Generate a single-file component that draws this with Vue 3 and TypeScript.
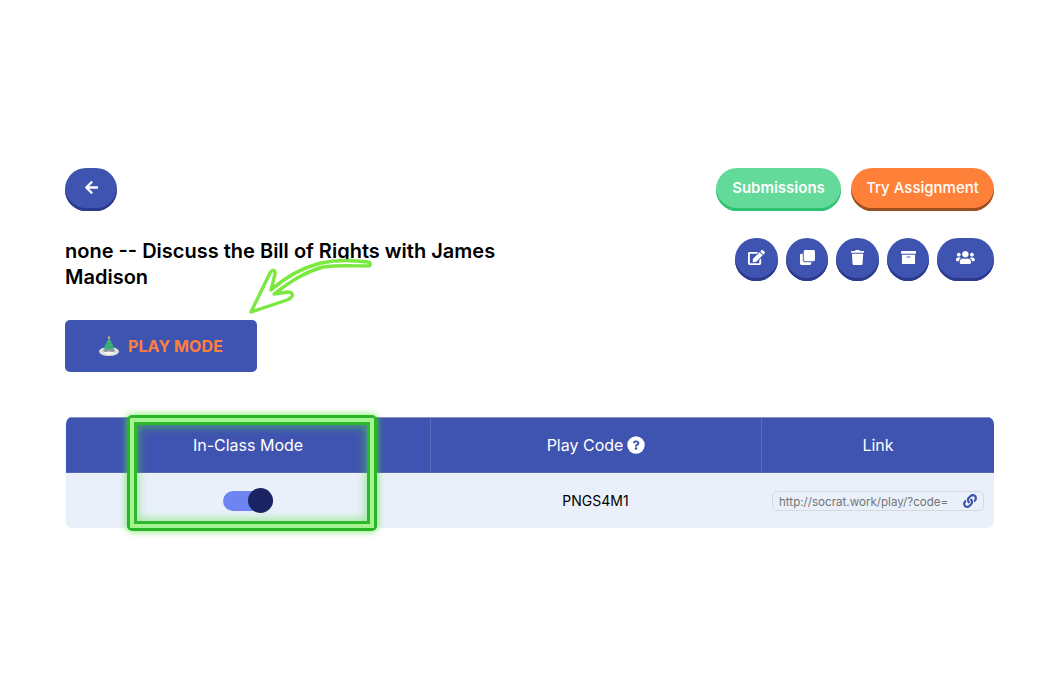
<template>
  <div class="page">
    <div class="top-row">
      <button class="btn btn-blue btn-back" aria-label="Back">
        <svg class="ico" viewBox="0 0 448 512"><path :d="icons.back" /></svg>
      </button>
      <div class="top-actions">
        <button class="btn btn-green">Submissions</button>
        <button class="btn btn-orange">Try Assignment</button>
      </div>
    </div>

    <div class="title-row">
      <h1 class="title">none -- Discuss the Bill of Rights with James Madison</h1>
      <div class="icon-actions">
        <button v-for="b in iconButtons" :key="b.name" class="btn btn-blue btn-icon" :class="b.cls" :aria-label="b.name">
          <svg class="ico" :viewBox="b.box"><path :d="b.d" /></svg>
        </button>
      </div>
    </div>

    <button class="play-btn">
      <svg class="play-ico" viewBox="0 0 20 20">
        <ellipse cx="10" cy="15.500" rx="10" ry="4.500" fill="#dfe0dc" />
        <ellipse cx="10" cy="14.500" rx="6" ry="2.200" fill="#8f96a0" />
        <ellipse cx="10" cy="17" rx="5" ry="1.500" fill="#f3f3ef" />
        <path d="M10 1.500l5.500 11q-5.500 2-11 0z" fill="#3fb57c" />
        <path d="M7.500 7.500q2.500 1 5 0M6 10.500q4 1.300 8 0" fill="none" stroke="#2f8f74" stroke-width="0.800" />
        <circle cx="10" cy="1.500" r="1.200" fill="#e9a05c" />
      </svg>
      <span>PLAY MODE</span>
    </button>

    <div class="table">
      <div class="cell head">In-Class Mode</div>
      <div class="cell head sep">
        Play Code
        <svg class="help" viewBox="0 0 512 512">
          <circle cx="256" cy="256" r="248" fill="#fff" />
          <path class="help-mark" :d="icons.helpMark" />
        </svg>
      </div>
      <div class="cell head sep">Link</div>
      <div class="cell">
        <span class="toggle"><span class="knob"></span></span>
      </div>
      <div class="cell code">PNGS4M1</div>
      <div class="cell">
        <div class="link-box">
          <span class="link-text">http://socrat.work/play/?code=</span>
          <svg class="link-ico" viewBox="0 0 512 512"><path :d="icons.link" /></svg>
        </div>
      </div>
    </div>

    <!-- hand drawn annotations on top of the screenshot -->
    <div class="mark-box"></div>
    <svg class="mark-arrow" viewBox="0 0 130 60">
      <path
        d="M125 5C110 3 92 3 78 6C62 10 45 18 28 33L32 17C33 13 29 12 27 16L8 55L44 43C51 40 51 35 45 35L31 37C48 24 62 15 80 10C95 8 112 9 125 9C128 9 128 5 125 5Z"
        fill="#fff"
        stroke="#7be83f"
        stroke-width="3.400"
        stroke-linejoin="round"
      />
    </svg>
  </div>
</template>

<script setup lang="ts">
const icons = {
  back: 'M257.5 445.1l-22.2 22.2c-9.4 9.4-24.6 9.4-33.9 0L7 273c-9.4-9.4-9.4-24.6 0-33.9L201.4 44.7c9.4-9.4 24.6-9.4 33.9 0l22.2 22.2c9.5 9.5 9.3 25-.4 34.3L136.6 216H424c13.3 0 24 10.7 24 24v32c0 13.3-10.7 24-24 24H136.6l120.5 114.8c9.8 9.3 10 24.8.4 34.3z',
  helpMark: 'M262.655 90c-54.497 0-89.255 22.957-116.549 63.758-3.536 5.286-2.353 12.415 2.715 16.258l34.699 26.31c5.205 3.947 12.621 3.008 16.665-2.122 17.864-22.658 30.113-35.797 57.303-35.797 20.429 0 45.698 13.148 45.698 32.958 0 14.976-12.363 22.667-32.534 33.976C247.128 238.528 216 254.941 216 296v4c0 6.627 5.373 12 12 12h56c6.627 0 12-5.373 12-12v-1.333c0-28.462 83.186-29.647 83.186-106.667 0-58.002-60.165-102-116.531-102zM256 338c-25.365 0-46 20.635-46 46 0 25.364 20.635 46 46 46s46-20.636 46-46c0-25.365-20.635-46-46-46z',
  link: 'M326.612 185.391c59.747 59.809 58.927 155.698.36 214.59-.11.12-.24.25-.36.37l-67.2 67.2c-59.27 59.27-155.699 59.262-214.96 0-59.27-59.26-59.27-155.7 0-214.96l37.106-37.106c9.84-9.84 26.786-3.3 27.294 10.606.648 17.722 3.826 35.527 9.69 52.721 1.986 5.822.567 12.262-3.783 16.612l-13.087 13.087c-28.026 28.026-28.905 73.66-1.155 101.96 28.024 28.579 74.086 28.749 102.325.51l67.2-67.19c28.191-28.191 28.073-73.757 0-101.83-3.701-3.694-7.429-6.564-10.341-8.569a16.037 16.037 0 0 1-6.947-12.606c-.396-10.567 3.348-21.456 11.698-29.806l21.054-21.055c5.521-5.521 14.182-6.199 20.584-1.731a152.482 152.482 0 0 1 20.522 17.197zM467.547 44.449c-59.261-59.262-155.69-59.27-214.96 0l-67.2 67.2c-.12.12-.25.25-.36.37-58.566 58.892-59.387 154.781.36 214.59a152.454 152.454 0 0 0 20.521 17.196c6.402 4.468 15.064 3.789 20.584-1.731l21.054-21.055c8.35-8.35 12.094-19.239 11.698-29.806a16.037 16.037 0 0 0-6.947-12.606c-2.912-2.005-6.64-4.875-10.341-8.569-28.073-28.073-28.191-73.639 0-101.83l67.2-67.19c28.239-28.239 74.3-28.069 102.325.51 27.75 28.3 26.872 73.934-1.155 101.96l-13.087 13.087c-4.35 4.35-5.769 10.79-3.783 16.612 5.864 17.194 9.042 34.999 9.69 52.721.509 13.906 17.454 20.446 27.294 10.606l37.106-37.106c59.271-59.259 59.271-155.699.001-214.959z'
}

const iconButtons = [
  {
    name: 'Edit',
    cls: '',
    box: '0 0 576 512',
    d: 'M402.6 83.2l90.2 90.2c3.8 3.8 3.8 10 0 13.8L274.4 405.6l-92.8 10.3c-12.4 1.4-22.9-9.1-21.5-21.5l10.3-92.8L388.8 83.2c3.8-3.8 10-3.8 13.8 0zm162-22.9l-48.8-48.8c-15.2-15.2-39.9-15.2-55.2 0l-35.4 35.4c-3.8 3.8-3.8 10 0 13.8l90.2 90.2c3.8 3.8 10 3.8 13.8 0l35.4-35.4c15.2-15.3 15.2-40 0-55.2zM384 346.2V448H64V128h229.8c3.2 0 6.2-1.3 8.5-3.5l40-40c7.6-7.6 2.2-20.5-8.5-20.5H48C21.5 64 0 85.5 0 112v352c0 26.5 21.5 48 48 48h352c26.5 0 48-21.5 48-48V306.2c0-10.7-12.9-16-20.5-8.5l-40 40c-2.2 2.3-3.5 5.3-3.5 8.5z'
  },
  {
    name: 'Copy',
    cls: 'btn-narrow',
    box: '0 0 512 512',
    d: 'M464 0c26.51 0 48 21.49 48 48v288c0 26.51-21.49 48-48 48H176c-26.51 0-48-21.49-48-48V48c0-26.51 21.49-48 48-48h288M176 416c-44.112 0-80-35.888-80-80V128H48c-26.51 0-48 21.49-48 48v288c0 26.51 21.49 48 48 48h288c26.51 0 48-21.49 48-48v-48H176z'
  },
  {
    name: 'Delete',
    cls: '',
    box: '0 0 448 512',
    d: 'M432 32H312l-9.4-18.7A24 24 0 0 0 281.1 0H166.8a23.72 23.72 0 0 0-21.4 13.3L136 32H16A16 16 0 0 0 0 48v32a16 16 0 0 0 16 16h416a16 16 0 0 0 16-16V48a16 16 0 0 0-16-16zM53.2 467a48 48 0 0 0 47.9 45h245.8a48 48 0 0 0 47.9-45L416 128H32z'
  },
  {
    name: 'Archive',
    cls: 'btn-narrow',
    box: '0 0 512 512',
    d: 'M32 448c0 17.7 14.3 32 32 32h384c17.7 0 32-14.3 32-32V160H32v288zm160-212c0-6.6 5.4-12 12-12h104c6.6 0 12 5.4 12 12v8c0 6.6-5.4 12-12 12H204c-6.6 0-12-5.4-12-12v-8zM480 32H32C14.3 32 0 46.3 0 64v48c0 8.8 7.2 16 16 16h480c8.8 0 16-7.2 16-16V64c0-17.7-14.3-32-32-32z'
  },
  {
    name: 'Users',
    cls: 'btn-wide',
    box: '0 0 640 512',
    d: 'M96 224c35.3 0 64-28.7 64-64s-28.7-64-64-64-64 28.7-64 64 28.7 64 64 64zm448 0c35.3 0 64-28.7 64-64s-28.7-64-64-64-64 28.7-64 64 28.7 64 64 64zm32 32h-64c-17.6 0-33.5 7.1-45.1 18.6 40.3 22.1 68.9 62 75.1 109.4h66c17.7 0 32-14.3 32-32v-32c0-35.3-28.7-64-64-64zm-256 0c61.9 0 112-50.1 112-112S381.9 32 320 32 208 82.1 208 144s50.1 112 112 112zm76.8 32h-8.3c-20.8 10-43.9 16-68.5 16s-47.6-6-68.5-16h-8.3C179.6 288 128 339.6 128 403.2V432c0 26.5 21.5 48 48 48h288c26.5 0 48-21.5 48-48v-28.8c0-63.6-51.6-115.2-115.2-115.2zm-223.7-13.4C161.5 263.1 145.6 256 128 256H64c-35.3 0-64 28.7-64 64v32c0 17.7 14.3 32 32 32h65.9c6.3-47.4 34.9-87.3 75.2-109.4z'
  }
]
</script>

<style>
html, body {
  background: #fff;
}
</style>

<style scoped>
.page {
  position: relative;
  box-sizing: border-box;
  width: 1059px;
  height: 686px;
  padding: 168px 65px 0;
  font-family: Inter, "Liberation Sans", sans-serif;
  color: #000;
}

.top-row {
  display: flex;
  justify-content: space-between;
  align-items: flex-start;
}

.top-actions {
  display: flex;
  gap: 10px;
}

.btn {
  display: inline-flex;
  align-items: center;
  justify-content: center;
  box-sizing: border-box;
  height: 43px;
  padding: 0 0 4px;
  border: 0;
  border-radius: 21px;
  color: #fff;
  font-family: inherit;
  font-size: 15px;
}

.btn-blue {
  background: #3f54b0;
  box-shadow: inset 0 -3px 0 #2b3a8c;
}

.btn-back {
  width: 52px;
  padding-left: 1px;
}

.btn-green {
  width: 125px;
  background: #63d99a;
  box-shadow: inset 0 -3px 0 #2ec373;
  font-weight: 600;
}

.btn-orange {
  width: 143px;
  background: #ff8038;
  box-shadow: inset 0 -3px 0 #9b4f22;
  font-weight: 500;
}

.ico {
  height: 15px;
  width: auto;
  fill: #fff;
}

.title-row {
  display: flex;
  justify-content: space-between;
  align-items: flex-start;
  margin-top: 27px;
}

.title {
  width: 464px;
  margin: 0;
  font-size: 20px;
  font-weight: 600;
  line-height: 26px;
}

.icon-actions {
  display: flex;
  gap: 8px;
}

.btn-icon {
  width: 43px;
}

.btn-narrow {
  width: 42px;
}

.btn-wide {
  width: 57px;
}

.play-btn {
  display: flex;
  align-items: center;
  justify-content: center;
  gap: 9px;
  width: 192px;
  height: 52px;
  margin-top: 30px;
  padding: 0;
  border: 0;
  border-radius: 5px;
  background: #3f54b0;
  color: #ff7f3e;
  font-family: inherit;
  font-size: 16px;
  font-weight: 700;
  letter-spacing: 0.1px;
}

.play-ico {
  width: 20px;
  height: 20px;
}

.table {
  display: grid;
  grid-template-columns: 364px 331px 233px;
  grid-template-rows: 56px 55px;
  margin-top: 45px;
  border-left: 1px solid #f4f7fc;
  border-radius: 7px;
  overflow: hidden;
  background: #e9f0fa;
}

.cell {
  display: flex;
  align-items: center;
  justify-content: center;
  font-size: 14px;
}

.head {
  gap: 4px;
  background: #3f54b0;
  color: #fff;
  font-size: 16px;
  border-top: 1px solid #8a94bf;
  border-bottom: 1px solid #5265b8;
}

.sep {
  border-left: 1px solid #5a6cbc;
}

.toggle {
  position: relative;
  display: block;
  width: 50px;
  height: 20px;
  border-radius: 10px;
  background: #6e84f2;
}

.knob {
  position: absolute;
  top: -2.500px;
  right: 0;
  width: 25px;
  height: 25px;
  border-radius: 50%;
  background: #1a2463;
}

.help {
  width: 18px;
  height: 18px;
}

.help-mark {
  fill: #3f54b0;
  transform: scale(0.78);
  transform-origin: 256px 256px;
}

.link-box {
  display: flex;
  align-items: center;
  justify-content: space-between;
  box-sizing: border-box;
  width: 212px;
  height: 20px;
  margin-left: 1px;
  padding: 0 6px;
  border: 1px solid #d5d9e0;
  border-radius: 5px;
}

.link-text {
  margin-top: 2px;
  color: #757575;
  font-size: 11.6px;
  white-space: nowrap;
}

.link-ico {
  width: 14px;
  height: 14px;
  fill: #3f54b0;
}

.mark-box {
  position: absolute;
  left: 127px;
  top: 415px;
  box-sizing: border-box;
  width: 250px;
  height: 116px;
  border: 3px solid #28b528;
  border-radius: 5px;
  box-shadow: 0 0 6px 1px rgba(90, 230, 60, 0.7);
}

.mark-box::after {
  content: "";
  position: absolute;
  inset: 0;
  border: 4px solid #a4f492;
  box-shadow: inset 0 0 0 3px #2fb82f, inset 0 0 9px 5px rgba(90, 230, 60, 0.5);
}

.mark-arrow {
  position: absolute;
  left: 243px;
  top: 257px;
  width: 130px;
  height: 60px;
  overflow: visible;
}
</style>
